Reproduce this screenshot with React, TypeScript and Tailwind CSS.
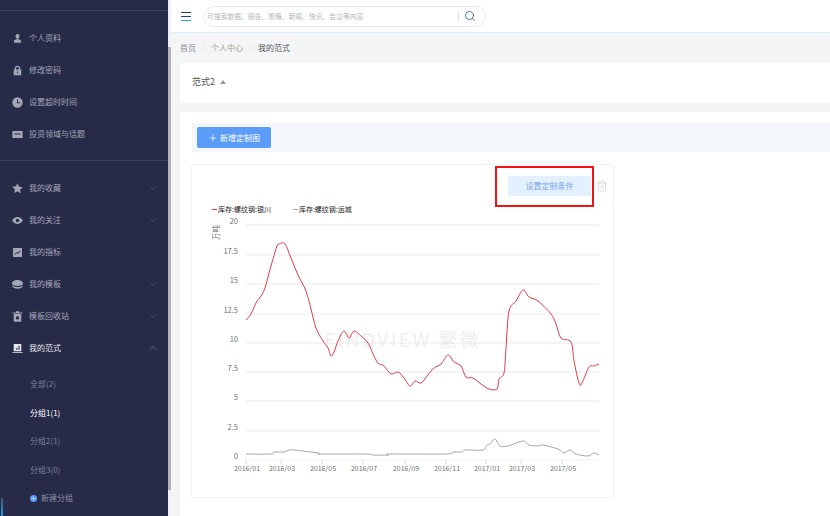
import React from 'react';
import { ChevronDown, ChevronUp, ChevronRight, Plus, Search, Trash2 } from 'lucide-react';

const font = 'font-["Noto_Sans_CJK_SC","Liberation_Sans",sans-serif]';

const icons: { [key: string]: React.ReactNode } = {
  user: <path d="M8 1.500a3 3 0 0 1 3 3c0 1.500-.8 3-2 3.600v.9c2 .3 4 .8 4 2V14H3v-3c0-1.200 2-1.700 4-2v-.9C5.800 7.500 5 6 5 4.500a3 3 0 0 1 3-3z" />,
  lock: <path d="M2.500 6.500h1.500V5a4 4 0 0 1 8 0v1.500h1.500v8.500h-11zM6 6.500h4V5a2 2 0 0 0-4 0zm1.300 3v2.500h1.400V9.500z" fillRule="evenodd" />,
  clock: <path d="M8 .5a7.500 7.500 0 1 1 0 15 7.500 7.500 0 0 1 0-15zm-.7 3v5.500h4.500V7.800H8.700V3.500z" fillRule="evenodd" />,
  topic: <path d="M.5 3h15v10H.5zM3.500 6.500v1.500h9V6.500z" fillRule="evenodd" />,
  star: <path d="M8 .5l2.300 4.900 5.400.7-4 3.700 1.100 5.400L8 12.100l-4.800 2.600 1.100-5.400-4-3.700 5.400-.7z" />,
  eye: <path d="M8 3c3.500 0 6.300 2.500 8 5-1.700 2.500-4.500 5-8 5s-6.300-2.500-8-5c1.700-2.500 4.500-5 8-5zm0 2.500a2.500 2.500 0 1 0 0 5 2.500 2.500 0 0 0 0-5z" fillRule="evenodd" />,
  chart: <path d="M1.500 1.500h13v13h-13zM3.500 10.500l.8.8L7 8.700l1.500 1.300 4-3.800-.8-.8L8.500 8.400 7 7.100z" fillRule="evenodd" />,
  layers: <path d="M8 1.500c4 0 8 2 8 4.500s-4 4-8 4-8-1.500-8-4 4-4.500 8-4.500zM1 9.500c1.500 1.500 4 2.200 7 2.200s5.500-.7 7-2.200l1 1c-1.500 2.200-4.500 3.500-8 3.500s-6.500-1.300-8-3.500z" />,
  bin: <path d="M5.500 .5h5V2H15v1.500H1V2h4.500zM2.500 4.500h11v11h-11zM8 7.500a2.500 2.500 0 1 0 0 5 2.500 2.500 0 0 0 0-5z" fillRule="evenodd" />,
  form: <path d="M2.500 1.500h11v10.500h-11zM9.500 4v6H11V4zM6.500 7v3H8V7zM0.500 13.300h15v1.400H.5z" fillRule="evenodd" />,
};

const topMenu = [
  { label: '个人资料', icon: 'user' },
  { label: '修改密码', icon: 'lock' },
  { label: '设置超时时间', icon: 'clock' },
  { label: '投资领域与话题', icon: 'topic' },
];

const mainMenu = [
  { label: '我的收藏', icon: 'star', arrow: true },
  { label: '我的关注', icon: 'eye', arrow: true },
  { label: '我的指标', icon: 'chart', arrow: false },
  { label: '我的模板', icon: 'layers', arrow: true },
  { label: '模板回收站', icon: 'bin', arrow: true },
];

const groups = [
  { label: '全部(2)', active: false },
  { label: '分组1(1)', active: true },
  { label: '分组2(1)', active: false },
  { label: '分组3(0)', active: false },
];

const redLine = '245,319 250,313 255,302 260,295 264,287 268,272 272,258 276,245 278,243 284,243 290,257 297,274 305,290 310,308 315,327 322,340 327,347 330,355 333,351 337,340 343,330 348,337 353,330 360,335 367,342 372,353 377,362 383,365 390,373 397,371 403,377 409,385 414,380 420,382 426,375 433,367 440,363 447,354 453,361 460,365 465,376 472,377 480,383 488,388 496,388 498,378 503,372 505,347 508,310 515,300 522,289 528,296 537,300 550,313 555,323 560,337 570,341 573,360 578,382 581,382 588,366 593,365 598,363';
const grayLine = '245,453 270,453 273,451 283,451 288,449 293,449 317,452 320,453 365,453 372,454 387,454 390,453 445,453 452,451 460,451 465,449 482,449 486,444 489,443 494,438 499,445 507,445 515,442 523,440 528,444 537,445 542,444 557,448 563,452 569,449 575,453 587,455 593,452 598,454';

const yTicks = [
  { label: '20', y: 224 },
  { label: '17.5', y: 254 },
  { label: '15', y: 283 },
  { label: '12.5', y: 313 },
  { label: '10', y: 342 },
  { label: '7.5', y: 371 },
  { label: '5', y: 400 },
  { label: '2.5', y: 430 },
  { label: '0', y: 459 },
];

const xTicks = [
  { label: '2016/01', x: 245 },
  { label: '2016/03', x: 280 },
  { label: '2016/05', x: 321 },
  { label: '2016/07', x: 362 },
  { label: '2016/09', x: 404 },
  { label: '2016/11', x: 445 },
  { label: '2017/01', x: 485 },
  { label: '2017/03', x: 520 },
  { label: '2017/05', x: 561 },
];

// Turn "x,y x,y" points into a smooth cubic path
const smoothPath = (points: string): string => {
  const pts = points.split(' ').map(p => p.split(',').map(Number));
  let d = `M${pts[0][0]} ${pts[0][1]}`;
  for (let i = 0; i < pts.length - 1; i++) {
    const p0 = pts[Math.max(i - 1, 0)];
    const p1 = pts[i];
    const p2 = pts[i + 1];
    const p3 = pts[Math.min(i + 2, pts.length - 1)];
    const c1x = p1[0] + (p2[0] - p0[0]) / 6;
    const c1y = p1[1] + (p2[1] - p0[1]) / 6;
    const c2x = p2[0] - (p3[0] - p1[0]) / 6;
    const c2y = p2[1] - (p3[1] - p1[1]) / 6;
    d += `C${c1x} ${c1y} ${c2x} ${c2y} ${p2[0]} ${p2[1]}`;
  }
  return d;
};

const MenuIcon = ({ name }: { name: string }) => (
  <svg viewBox="0 0 16 16" className="w-[11px] h-[11px] shrink-0" fill="currentColor">
    {icons[name]}
  </svg>
);

const MenuRow = ({ label, icon, arrow, open }: { label: string; icon: string; arrow?: boolean; open?: boolean }) => (
  <div className={`h-8 flex items-center pl-3 pr-[9px] text-[8px] ${open ? 'text-[#e6e8ef]' : 'text-[#a3a6b6]'}`}>
    <MenuIcon name={icon} />
    <span className="ml-[6px] flex-1">{label}</span>
    {arrow && !open && <ChevronDown size={12} strokeWidth={1} className="text-[#6d7188]" />}
    {open && <ChevronUp size={12} strokeWidth={1} className="text-[#a3a6b6]" />}
  </div>
);

const Sidebar = () => (
  <aside className="relative w-[168px] shrink-0 h-full bg-[#272b48]">
    <div className="h-[12px] mt-[10px] border-t border-[#3a3f5e]" />
    {topMenu.map(item => (
      <MenuRow key={item.label} label={item.label} icon={item.icon} />
    ))}
    <div className="mt-[10px] h-[12px] border-t border-[#3a3f5e]" />
    {mainMenu.map(item => (
      <MenuRow key={item.label} label={item.label} icon={item.icon} arrow={item.arrow} />
    ))}
    <MenuRow label="我的范式" icon="form" open />
    <div className="mt-[6px] pl-[30px] text-[8px]">
      {groups.map(group => (
        <div key={group.label} className={`h-[28.500px] flex items-center ${group.active ? 'text-white' : 'text-[#7d8096]'}`}>
          {group.label}
        </div>
      ))}
      <div className="h-[28px] flex items-center text-[#8d90a4]">
        <span className="w-[7px] h-[7px] rounded-full bg-[#5a9cf8] mr-[4px] flex items-center justify-center">
          <Plus size={5} strokeWidth={2} className="text-white" />
        </span>
        新建分组
      </div>
    </div>
    <div className="absolute left-[1px] bottom-0 w-[2px] h-[18px] bg-gradient-to-b from-[#3d5a70] to-[#1f9be0]" />
  </aside>
);

const Header = () => (
  <header className="h-[33px] shrink-0 bg-white border-b border-[#dcedf8] flex items-center pl-[10px]">
    <svg viewBox="0 0 10 9" className="w-[10px] h-[9px]" fill="none" strokeWidth="1">
      <path d="M0 .5h10M0 4.500h10" stroke="#1f3f7f" />
      <path d="M0 8.500h10" stroke="#25a0e0" />
    </svg>
    <div className="ml-[12px] w-[283px] h-[21px] rounded-full border border-[#e8eaee] flex items-center pl-[3px] pr-[9px]">
      <span className="flex-1 text-[6.800px] text-[#b4b7be]">可搜索数据、报告、策略、新闻、快讯、会议等内容</span>
      <span className="w-px h-[11px] bg-[#dfe2e6] mr-[5px]" />
      <Search size={12} strokeWidth={1.500} className="text-[#1f4a8f]" />
    </div>
  </header>
);

const Breadcrumb = () => (
  <nav className="h-[30px] shrink-0 flex items-center pl-[9px] text-[8px] text-[#8f8f8f]">
    <span>首页</span>
    <ChevronRight size={8} strokeWidth={1} className="mx-[3.500px] text-[#b8b8b8]" />
    <span className="text-[#a89a8a]">个人中心</span>
    <ChevronRight size={8} strokeWidth={1} className="mx-[3.500px] text-[#b8b8b8]" />
    <span className="text-[#555]">我的范式</span>
  </nav>
);

const Chart = () => (
  <svg viewBox="191 200 422 280" className="w-[422px] h-[280px] block">
    <text x="402" y="346" fontSize="19" fill="#eeeeee" textAnchor="middle" letterSpacing="2.500">FINDVIEW 繁微</text>
    <g stroke="#e9eaec" strokeWidth="1">
      {yTicks.slice(0, -1).map(tick => (
        <line key={tick.label} x1="245" x2="598" y1={tick.y} y2={tick.y} />
      ))}
    </g>
    <line x1="245" x2="598" y1="459" y2="459" stroke="#eef0f6" />
    {xTicks.map(tick => (
      <line key={tick.label} x1={tick.x} x2={tick.x} y1="459" y2="463" stroke="#d5daea" />
    ))}
    <g fontSize="7.500" fill="#707070" textAnchor="end">
      {yTicks.map(tick => (
        <text key={tick.label} x="237" y={tick.y - 1}>{tick.label}</text>
      ))}
    </g>
    <g fontSize="7" fill="#707070" textAnchor="middle">
      {xTicks.map(tick => (
        <text key={tick.label} x={tick.x + 1} y="469.500">{tick.label}</text>
      ))}
    </g>
    <text transform="translate(218 239) rotate(-90)" fontSize="7.500" fill="#707070">万吨</text>
    <path d={smoothPath(grayLine)} fill="none" stroke="#a6a6a6" strokeWidth="1" />
    <path d={smoothPath(redLine)} fill="none" stroke="#e23a45" strokeWidth="1" />
  </svg>
);

const ChartCard = () => (
  <div className="relative w-[423px] h-[334px] ml-[11px] mt-[12px] border border-[#f0f1f3] rounded-[3px]">
    {/* red marker around the button */}
    <div className="absolute left-[303px] top-[1px] w-[99px] h-[41px] border-2 border-[#f01414] pointer-events-none" />
    <div className="flex items-center h-[42px] pl-[316px]">
      <button className="w-[83px] h-[20px] bg-[#e3f0fd] text-[8px] text-[#7aa6ef]">设置定制条件</button>
      <Trash2 size={12} strokeWidth={1} className="ml-[5px] text-[#b9bcc4]" />
    </div>
    <div className="h-[0px] flex items-center pl-[20px] gap-[22px] text-[7px] text-[#222] mt-[2px]">
      <span className="flex items-center"><i className="w-[5px] h-px bg-[#e23a45] mr-[1px]" />库存:螺纹钢:银川</span>
      <span className="flex items-center"><i className="w-[5px] h-px bg-[#a6a6a6] mr-[1px]" />库存:螺纹钢:运城</span>
    </div>
    <div className="-mt-[8px]">
      <Chart />
    </div>
  </div>
);

export default function App() {
  return (
    <div className={`w-[830px] h-[516px] overflow-hidden flex bg-[#f3f5f7] ${font}`}>
      <Sidebar />
      <div className="w-[3px] shrink-0 h-full flex flex-col bg-[#eef0f2]">
        <div className="mt-[47px] h-[443px] bg-[#b1b2b5]" />
      </div>
      <main className="flex-1 min-w-0 flex flex-col">
        <Header />
        <Breadcrumb />
        <div className="ml-[9px] h-[40px] shrink-0 bg-white rounded-l-[3px] flex items-center pl-[12px] pb-[3px] text-[9px] text-[#555]">
          范式2
          <span className="ml-[5px] w-0 h-0 border-x-[3px] border-x-transparent border-b-[4px] border-b-[#999]" />
        </div>
        <div className="ml-[9px] mt-[9px] flex-1 bg-white rounded-tl-[3px] pt-[11px]">
          <div className="ml-[12px] h-[29px] bg-[#f3f7fb] flex items-center pl-[5px]">
            <button className="w-[74px] h-[21px] rounded-[2px] bg-[#5a9cf8] text-white text-[8px] flex items-center justify-center">
              <Plus size={10} strokeWidth={1.750} className="mr-[2px]" />
              新增定制图
            </button>
          </div>
          <ChartCard />
        </div>
      </main>
    </div>
  );
}
